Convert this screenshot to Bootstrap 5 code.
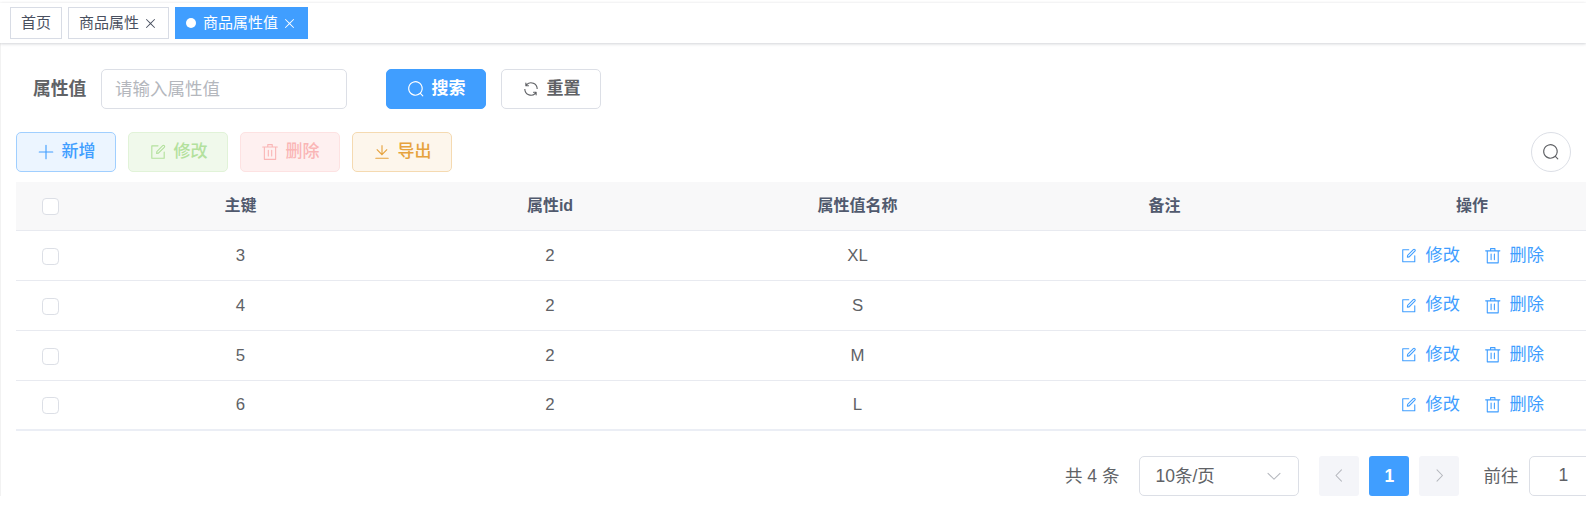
<!DOCTYPE html>
<html lang="zh">
<head>
    <meta charset="utf-8">
    <title>商品属性值</title>
    <link href="https://cdn.jsdelivr.net/npm/bootstrap@5.3.0/dist/css/bootstrap.min.css" rel="stylesheet">
    <style>
        html, body { height: 509px; overflow: hidden; }
        body { font-family: "Liberation Sans", "Noto Sans CJK SC", sans-serif; color: #606266; background: #fff; }
        .ico { width: 1em; height: 1em; fill: currentColor; flex: none; }
        .tag-bar { margin-top: 3px; height: 40px; padding: 4px 0 0 10px; gap: 6px; box-shadow: 0 1px 3px rgba(0,21,41,.16), 0 0 3px rgba(0,0,0,.05); position: relative; }
        .tag-item { height: 32px; padding: 0 10px; border: 1px solid #d8dce5; font-size: 15px; color: #495060; gap: 4px; background: #fff; }
        .tag-item .ico { font-size: 15px; }
        .tag-item.on { background: #409eff; border-color: #409eff; color: #fff; }
        .tag-dot { width: 10px; height: 10px; border-radius: 50%; background: #fff; margin-right: 3px; }
        .main-pane { padding: 26px 0 0 15px; border-left: 1px solid #f2f2f2; width: 1626px; }
        .search-label { margin-left: 17px; width: 68px; font-size: 17.8px; font-weight: 700; color: #606266; }
        .search-input { width: 246px; height: 40px; font-size: 17.5px; color: #606266; border: 1px solid #dcdfe6; border-radius: 5px; padding: 0 13px; box-shadow: none; }
        .search-input::placeholder { color: #b4b7bd; }
        .act-btn { width: 100px; height: 40px; padding: 0; font-size: 17px; font-weight: 500; border-radius: 5px; display: inline-flex; align-items: center; justify-content: center; gap: 7px; }
        .act-btn .ico { font-size: 18px; }
        .btn-find { background: #409eff; border: 1px solid #409eff; color: #fff; margin-left: 39px; font-weight: 700; }
        .btn-reset { background: #fff; border: 1px solid #dcdfe6; color: #606266; margin-left: 15px; font-weight: 700; }
        .tool-row { margin-top: 23px; gap: 12px; }
        .btn-add { background: #ecf5ff; border: 1px solid #a0cfff; color: #409eff; }
        .btn-edit { background: #f0f9eb; border: 1px solid #e1f3d8; color: #b3e19d; }
        .btn-del { background: #fef0f0; border: 1px solid #fde2e2; color: #fab6b6; }
        .btn-out { background: #fdf6ec; border: 1px solid #f5dab1; color: #e6a23c; }
        .circle-btn { width: 40px; height: 40px; padding: 0; border-radius: 50%; border: 1px solid #dcdfe6; background: #fff; color: #606266; margin-left: 1067px; display: inline-flex; align-items: center; justify-content: center; }
        .circle-btn .ico { font-size: 18px; }
        .data-table { width: 1609px; table-layout: fixed; margin: 10px 0 0; font-size: 16.8px; border-bottom: 2px solid #ebeef5; }
        .data-table th, .data-table td { padding: 0; height: 49.8px; text-align: center; vertical-align: middle; color: #606266; border-bottom: 1px solid #e8eaf0; }
        .data-table th { height: 48.7px; background: #f8f8f9; color: #515a6e; font-size: 16px; font-weight: 700; }
        .data-table tbody tr:last-child td { border-bottom: 0; }
        .data-table th:first-child, .data-table td:first-child { padding-right: 2px; }
        .tick { width: 17px; height: 17px; margin: 0; border: 1px solid #dcdfe6; border-radius: 3px; vertical-align: middle; }
        .row-link { color: #409eff; text-decoration: none; gap: 8px; font-size: 17.2px; }
        .row-link .ico { font-size: 17.5px; }
        .pager-row { padding: 25px 0 0 1049px; font-size: 17.5px; white-space: nowrap; }
        .size-select { width: 160px; height: 40px; margin-left: 20px; margin-right: 10px; padding: 0 15px; border: 1px solid #dcdfe6; border-radius: 5px; }
        .size-select .ico { font-size: 18px; color: #b4b7bd; }
        .page-box { width: 40px; height: 40px; margin-left: 10px; border-radius: 3px; background: #f4f5f9; color: #b4b7bd; }
        .page-box .ico { font-size: 17px; }
        .page-box.on { background: #409eff; color: #fff; font-weight: 700; }
        .jump-input { width: 68px; height: 40px; margin-left: 11px; border: 1px solid #dcdfe6; border-radius: 5px; font-size: 17.5px; color: #606266; text-align: center; padding: 0; box-shadow: none; }
    </style>
</head>
<body>
    <svg width="0" height="0" class="d-block position-absolute">
        <symbol id="i-search" viewBox="0 0 1024 1024"><path d="m795.904 750.72 124.992 124.928a32 32 0 0 1-45.248 45.248L750.656 795.904a416 416 0 1 1 45.248-45.248zM480 832a352 352 0 1 0 0-704 352 352 0 0 0 0 704z"/></symbol>
        <symbol id="i-plus" viewBox="0 0 1024 1024"><path d="M480 480V128a32 32 0 0 1 64 0v352h352a32 32 0 1 1 0 64H544v352a32 32 0 1 1-64 0V544H128a32 32 0 0 1 0-64h352z"/></symbol>
        <symbol id="i-close" viewBox="0 0 1024 1024"><path d="M764.288 214.592 512 466.88 259.712 214.592a31.936 31.936 0 0 0-45.12 45.12L466.752 512 214.528 764.224a31.936 31.936 0 1 0 45.12 45.184L512 557.184l252.288 252.288a31.936 31.936 0 0 0 45.12-45.12L557.12 512.064l252.288-252.352a31.936 31.936 0 1 0-45.12-45.184z"/></symbol>
        <symbol id="i-edit" viewBox="0 0 1024 1024"><path d="M832 512a32 32 0 1 1 64 0v352a32 32 0 0 1-32 32H160a32 32 0 0 1-32-32V160a32 32 0 0 1 32-32h352a32 32 0 0 1 0 64H192v640h640V512z"/><path d="m469.952 554.24 52.8-7.552L847.104 222.4a32 32 0 1 0-45.248-45.248L477.44 501.44l-7.552 52.8zm422.4-422.4a96 96 0 0 1 0 135.808l-331.84 331.84a32 32 0 0 1-18.112 9.088L436.8 623.68a32 32 0 0 1-36.224-36.224l15.104-105.6a32 32 0 0 1 9.024-18.112l331.904-331.84a96 96 0 0 1 135.744 0z"/></symbol>
        <symbol id="i-trash" viewBox="0 0 1024 1024"><path d="M160 256H96a32 32 0 0 1 0-64h256V95.936a32 32 0 0 1 32-32h256a32 32 0 0 1 32 32V192h256a32 32 0 1 1 0 64h-64v672a32 32 0 0 1-32 32H192a32 32 0 0 1-32-32V256zm448-64v-64H416v64h192zM224 896h576V256H224v640zm192-128a32 32 0 0 1-32-32V416a32 32 0 0 1 64 0v320a32 32 0 0 1-32 32zm192 0a32 32 0 0 1-32-32V416a32 32 0 0 1 64 0v320a32 32 0 0 1-32 32z"/></symbol>
        <symbol id="i-down" viewBox="0 0 1024 1024"><path d="M160 832h704a32 32 0 1 1 0 64H160a32 32 0 1 1 0-64zm384-253.696 236.288-236.352 45.248 45.248L508.8 704 192 387.2l45.248-45.248L480 584.704V128h64v450.304z"/></symbol>
        <symbol id="i-refresh" viewBox="0 0 1024 1024"><path d="M771.776 794.88A384 384 0 0 1 128 512h64a320 320 0 0 0 555.712 216.448H654.72a32 32 0 1 1 0-64h149.056a32 32 0 0 1 32 32v148.928a32 32 0 1 1-64 0v-50.56zM276.288 295.616h92.992a32 32 0 0 1 0 64H220.16a32 32 0 0 1-32-32V178.56a32 32 0 0 1 64 0v50.56A384 384 0 0 1 896.128 512h-64a320 320 0 0 0-555.776-216.384z"/></symbol>
        <symbol id="i-left" viewBox="0 0 1024 1024"><path d="M609.408 149.376 277.76 489.6a32 32 0 0 0 0 44.672l331.648 340.352a29.12 29.12 0 0 0 41.728 0 30.592 30.592 0 0 0 0-42.752L339.264 511.936l311.872-319.872a30.592 30.592 0 0 0 0-42.688 29.12 29.12 0 0 0-41.728 0z"/></symbol>
        <symbol id="i-right" viewBox="0 0 1024 1024"><path d="M340.864 149.312a30.592 30.592 0 0 0 0 42.752L652.736 512 340.864 831.872a30.592 30.592 0 0 0 0 42.752 29.12 29.12 0 0 0 41.728 0L714.24 534.336a32 32 0 0 0 0-44.672L382.592 149.376a29.12 29.12 0 0 0-41.728 0z"/></symbol>
        <symbol id="i-chev" viewBox="0 0 1024 1024"><path d="M831.872 340.864 512 652.672 192.128 340.864a30.592 30.592 0 0 0-42.752 0 29.12 29.12 0 0 0 0 41.728L489.664 714.24a32 32 0 0 0 44.672 0l340.288-331.712a29.12 29.12 0 0 0 0-41.728 30.592 30.592 0 0 0-42.752 0z"/></symbol>
    </svg>

    <div class="tag-bar d-flex">
        <div class="tag-item d-flex align-items-center">首页</div>
        <div class="tag-item d-flex align-items-center">商品属性<svg class="ico"><use href="#i-close"/></svg></div>
        <div class="tag-item on d-flex align-items-center"><span class="tag-dot"></span>商品属性值<svg class="ico"><use href="#i-close"/></svg></div>
    </div>

    <div class="main-pane">
        <div class="d-flex align-items-center">
            <span class="search-label">属性值</span>
            <input class="form-control search-input" placeholder="请输入属性值">
            <button class="btn act-btn btn-find"><svg class="ico"><use href="#i-search"/></svg>搜索</button>
            <button class="btn act-btn btn-reset"><svg class="ico"><use href="#i-refresh"/></svg>重置</button>
        </div>

        <div class="tool-row d-flex align-items-center">
            <button class="btn act-btn btn-add"><svg class="ico"><use href="#i-plus"/></svg>新增</button>
            <button class="btn act-btn btn-edit"><svg class="ico"><use href="#i-edit"/></svg>修改</button>
            <button class="btn act-btn btn-del"><svg class="ico"><use href="#i-trash"/></svg>删除</button>
            <button class="btn act-btn btn-out"><svg class="ico"><use href="#i-down"/></svg>导出</button>
            <button class="btn circle-btn"><svg class="ico"><use href="#i-search"/></svg></button>
        </div>

        <table class="table data-table">
            <colgroup>
                <col style="width:70px"><col style="width:309px"><col style="width:310px"><col style="width:305px"><col style="width:309px"><col style="width:306px">
            </colgroup>
            <thead>
                <tr><th><input type="checkbox" class="form-check-input tick"></th><th>主键</th><th>属性id</th><th>属性值名称</th><th>备注</th><th>操作</th></tr>
            </thead>
            <tbody id="rows"></tbody>
        </table>

        <div class="pager-row d-flex align-items-center">
            <span>共 4 条</span>
            <div class="size-select d-flex align-items-center justify-content-between">10条/页 <svg class="ico"><use href="#i-chev"/></svg></div>
            <div class="page-box d-flex align-items-center justify-content-center"><svg class="ico"><use href="#i-left"/></svg></div>
            <div class="page-box on d-flex align-items-center justify-content-center">1</div>
            <div class="page-box d-flex align-items-center justify-content-center"><svg class="ico"><use href="#i-right"/></svg></div>
            <span class="ms-4">前往</span>
            <input class="form-control jump-input" value="1">
        </div>
    </div>

    <script src="https://cdn.jsdelivr.net/npm/bootstrap@5.3.0/dist/js/bootstrap.bundle.min.js"></script>
    <script>
        const rows = [[3, 2, 'XL'], [4, 2, 'S'], [5, 2, 'M'], [6, 2, 'L']];
        document.getElementById('rows').innerHTML = rows.map(r => `<tr>
            <td><input type="checkbox" class="form-check-input tick"></td>
            <td>${r[0]}</td><td>${r[1]}</td><td>${r[2]}</td><td></td>
            <td><div class="d-flex justify-content-center gap-4">
                <a class="row-link d-inline-flex align-items-center" href="#"><svg class="ico"><use href="#i-edit"/></svg>修改</a>
                <a class="row-link d-inline-flex align-items-center" href="#"><svg class="ico"><use href="#i-trash"/></svg>删除</a>
            </div></td></tr>`).join('');
    </script>
</body>
</html>
